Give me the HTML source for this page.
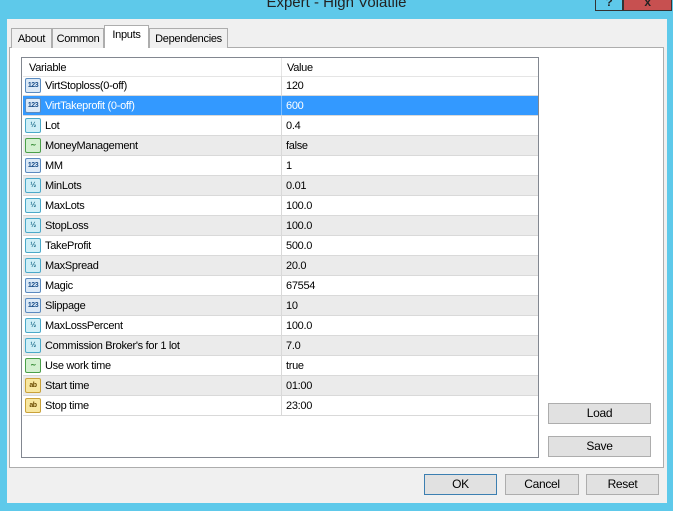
<!DOCTYPE html>
<html><head><style>
*{box-sizing:border-box;margin:0;padding:0}
body{width:673px;height:511px;background:#5ec9ea;font-family:"Liberation Sans",sans-serif;font-size:11px;color:#000;position:relative;overflow:hidden;letter-spacing:-0.3px}
.abs{position:absolute}
.title{left:0;top:-6px;width:673px;text-align:center;font-size:15px;color:#222;letter-spacing:0}
.body{left:7px;top:19px;width:660px;height:484px;background:#f0f0f0}
.tab{top:28px;height:20px;border:1px solid #adadad;border-bottom:none;background:#f0f0f0;padding:4px 0 0;text-align:center;font-size:11px}
.tab.sel{top:25px;height:23px;background:#fff;padding-top:3px;z-index:2}
.panel{left:9px;top:47px;width:655px;height:421px;background:#fff;border:1px solid #adadad}
.grid{left:21px;top:57px;width:518px;height:401px;border:1px solid #828790;background:#fff}
.row{position:absolute;left:1px;width:515px;height:20px;border-bottom:1px solid #d9d9d9}
.row .c1{position:absolute;left:22px;top:4px}
.row .c2{position:absolute;left:258px;top:0;height:19px;border-left:1px solid #d9d9d9;padding:4px 0 0 4px;width:257px}
.g{background:#ebebeb}
.s{background:#3399ff;color:#fff}
.s .c2{border-left-color:#7fbfff}
.ic{position:absolute;left:2px;top:2px;width:16px;height:15px;border-radius:2px;font-size:7px;font-weight:bold;text-align:center;line-height:13px;letter-spacing:-0.5px}
.n{background:#dbe9f7;border:1px solid #5a8bc0;color:#1b4f8a}
.f{background:#cfeff7;border:1px solid #4aa9c9;color:#1b6c8a}
.b{background:#d3f0d0;border:1px solid #4aa04a;color:#1a7a1a}
.a{background:#f8e7a0;border:1px solid #c9a23a;color:#6a4a00}
.btn{height:21px;border:1px solid #adadad;background:#e1e1e1;text-align:center;line-height:19px;font-size:12px}
</style></head><body>
<div class="abs title">Expert - High Volatile</div>
<div class="abs" style="left:595px;top:0;width:28px;height:11px;border:1px solid #333;border-top:none;background:#5ec9ea;font-size:12px;font-weight:bold;text-align:center;line-height:4px;color:#222">?</div>
<div class="abs" style="left:623px;top:0;width:49px;height:11px;background:#c75050;border:1px solid #333;border-top:none;font-size:12px;font-weight:bold;text-align:center;line-height:4px;color:#222">x</div>
<div class="abs body"></div>
<div class="abs panel"></div>
<div class="abs tab" style="left:11px;width:41px">About</div>
<div class="abs tab" style="left:52px;width:52px">Common</div>
<div class="abs tab sel" style="left:104px;width:45px">Inputs</div>
<div class="abs tab" style="left:149px;width:79px">Dependencies</div>
<div class="abs grid">
<div class="row" style="top:0;height:19px;background:#fff;border-bottom:1px solid #e5e5e5"><span style="position:absolute;left:6px;top:4px">Variable</span><span class="c2" style="padding-left:5px;border-left-color:#e5e5e5">Value</span></div>
<div class="row" style="top:18px"><span class="ic n">123</span><span class="c1">VirtStoploss(0-off)</span><span class="c2">120</span></div>
<div class="row s" style="top:38px"><span class="ic n">123</span><span class="c1">VirtTakeprofit (0-off)</span><span class="c2">600</span></div>
<div class="row" style="top:58px"><span class="ic f">½</span><span class="c1">Lot</span><span class="c2">0.4</span></div>
<div class="row g" style="top:78px"><span class="ic b">∼</span><span class="c1">MoneyManagement</span><span class="c2">false</span></div>
<div class="row" style="top:98px"><span class="ic n">123</span><span class="c1">MM</span><span class="c2">1</span></div>
<div class="row g" style="top:118px"><span class="ic f">½</span><span class="c1">MinLots</span><span class="c2">0.01</span></div>
<div class="row" style="top:138px"><span class="ic f">½</span><span class="c1">MaxLots</span><span class="c2">100.0</span></div>
<div class="row g" style="top:158px"><span class="ic f">½</span><span class="c1">StopLoss</span><span class="c2">100.0</span></div>
<div class="row" style="top:178px"><span class="ic f">½</span><span class="c1">TakeProfit</span><span class="c2">500.0</span></div>
<div class="row g" style="top:198px"><span class="ic f">½</span><span class="c1">MaxSpread</span><span class="c2">20.0</span></div>
<div class="row" style="top:218px"><span class="ic n">123</span><span class="c1">Magic</span><span class="c2">67554</span></div>
<div class="row g" style="top:238px"><span class="ic n">123</span><span class="c1">Slippage</span><span class="c2">10</span></div>
<div class="row" style="top:258px"><span class="ic f">½</span><span class="c1">MaxLossPercent</span><span class="c2">100.0</span></div>
<div class="row g" style="top:278px"><span class="ic f">½</span><span class="c1">Commission Broker's for 1 lot</span><span class="c2">7.0</span></div>
<div class="row" style="top:298px"><span class="ic b">∼</span><span class="c1">Use work time</span><span class="c2">true</span></div>
<div class="row g" style="top:318px"><span class="ic a">ab</span><span class="c1">Start time</span><span class="c2">01:00</span></div>
<div class="row" style="top:338px"><span class="ic a">ab</span><span class="c1">Stop time</span><span class="c2">23:00</span></div>
</div>
<div class="abs btn" style="left:548px;top:403px;width:103px">Load</div>
<div class="abs btn" style="left:548px;top:436px;width:103px">Save</div>
<div class="abs btn" style="left:424px;top:474px;width:73px;border-color:#3c7fb1">OK</div>
<div class="abs btn" style="left:505px;top:474px;width:74px">Cancel</div>
<div class="abs btn" style="left:586px;top:474px;width:73px">Reset</div>
</body></html>
